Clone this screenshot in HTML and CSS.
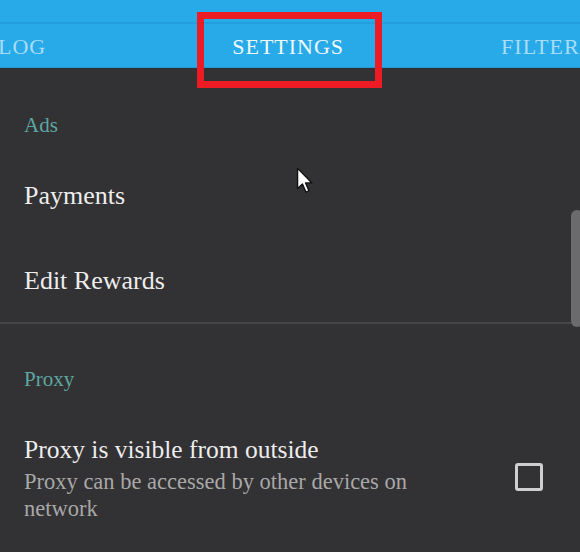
FILE: index.html
```html
<!DOCTYPE html>
<html>
<head>
<meta charset="utf-8">
<link rel="stylesheet" href="styles.css">
</head>
<body>
<div class="app">
  <header class="appbar">
    <div class="status"></div>
    <nav class="tabs">
      <span class="tab tab-log">LOG</span>
      <span class="tab tab-active">SETTINGS</span>
      <span class="tab tab-filter">FILTER</span>
    </nav>
  </header>
  <main class="content">
    <div class="section-title first">Ads</div>
    <div class="row"><span class="row-label">Payments</span></div>
    <div class="row"><span class="row-label">Edit Rewards</span></div>
    <div class="divider"></div>
    <div class="section-title">Proxy</div>
    <div class="row-check">
      <div class="row-text">
        <div class="row-title">Proxy is visible from outside</div>
        <div class="row-sub">Proxy can be accessed by other devices on network</div>
      </div>
      <div class="checkbox"></div>
    </div>
  </main>
  <div class="scrollbar"></div>
  <div class="highlight"></div>
  <svg class="cursor" width="18" height="27" viewBox="0 0 13 20">
    <path d="M1 1 L1 16 L4.6 12.6 L7.2 18.6 L9.4 17.6 L6.9 11.8 L11.6 11.8 Z" fill="#fff" stroke="#111" stroke-width="1" stroke-linejoin="round"/>
  </svg>
</div>
</body>
</html>
```
FILE: styles.css
```css
html, body {
  margin: 0;
  padding: 0;
}
body {
  background: #323133;
  font-family: "Liberation Serif", "Times New Roman", serif;
  width: 580px;
  height: 552px;
  overflow: hidden;
}
.app {
  position: relative;
  width: 580px;
  height: 552px;
  overflow: hidden;
}
.appbar {
  background: #28aae9;
}
.status {
  height: 22px;
  border-bottom: 2px solid #239fdd;
}
.tabs {
  height: 43px;
  display: flex;
  align-items: center;
  white-space: nowrap;
  overflow: hidden;
  border-bottom: 1px solid #2399d3;
  font-size: 22px;
  letter-spacing: 1px;
}
.tab {
  color: #a9dcf6;
  flex: none;
  padding-top: 2px;
}
.tab-log {
  margin-left: -2px;
}
.tab-active {
  color: #eef8fd;
  margin-left: 186px;
}
.tab-filter {
  margin-left: 157px;
}
.content {
  color: #ededed;
}
.section-title {
  font-size: 21px;
  line-height: 24px;
  color: #5ea7a2;
  padding: 43px 24px 0;
}
.section-title.first {
  padding: 45px 24px 15px;
}
.row {
  padding: 29px 24px 26px;
  height: 30px;
}
.row-label {
  font-size: 26px;
  line-height: 30px;
}
.divider {
  height: 2px;
  background: #464547;
}
.row-check {
  display: flex;
  align-items: flex-start;
  gap: 51px;
  padding: 44px 37px 0 24px;
}
.row-text {
  flex: 1;
}
.row-title {
  font-size: 25.5px;
  line-height: 30px;
  margin-bottom: 3px;
}
.row-sub {
  font-size: 22.5px;
  line-height: 27px;
  color: #a8a8a8;
}
.checkbox {
  flex: none;
  width: 28px;
  height: 28px;
  box-sizing: border-box;
  border: 3px solid #cfcfcf;
  border-radius: 3px;
  margin-top: 28px;
}
.scrollbar {
  position: absolute;
  left: 571px;
  top: 210px;
  width: 12px;
  height: 117px;
  background: #6b6a6c;
  border-radius: 6px;
}
.highlight {
  position: absolute;
  left: 197px;
  top: 12px;
  width: 185px;
  height: 76px;
  box-sizing: border-box;
  border: 7px solid #ed1c24;
}
.cursor {
  position: absolute;
  left: 296px;
  top: 167px;
}
```
